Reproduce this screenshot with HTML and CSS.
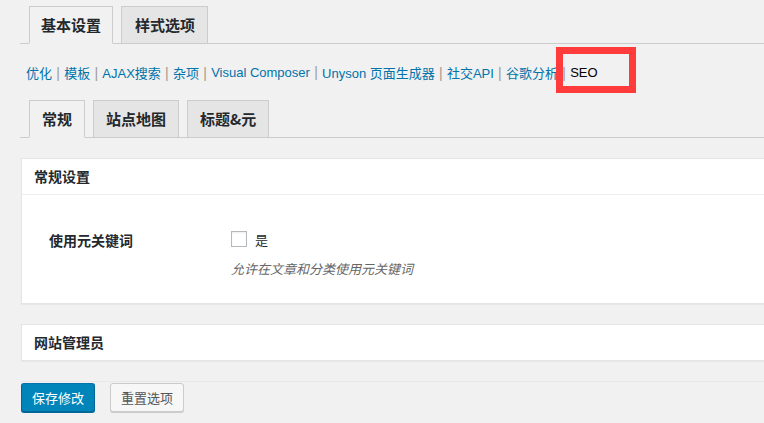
FILE: index.html
```html
<!DOCTYPE html>
<html lang="zh-CN">
<head>
<meta charset="utf-8">
<title>SEO 设置</title>
<link rel="stylesheet" href="styles.css">
</head>
<body>
<div class="wrap">
  <div class="nav-tabs nav-tabs-top">
    <span class="nav-tab active">基本设置</span>
    <span class="nav-tab">样式选项</span>
  </div>
  <ul class="subsub">
    <li><a href="#">优化</a><span class="sep">|</span></li>
    <li><a href="#">模板</a><span class="sep">|</span></li>
    <li><a href="#">AJAX搜索</a><span class="sep">|</span></li>
    <li><a href="#">杂项</a><span class="sep">|</span></li>
    <li><a href="#">Visual Composer</a><span class="sep">|</span></li>
    <li><a href="#">Unyson 页面生成器</a><span class="sep">|</span></li>
    <li><a href="#">社交API</a><span class="sep">|</span></li>
    <li><a href="#">谷歌分析</a><span class="sep">|</span></li>
    <li><span class="current">SEO</span></li>
  </ul>
  <div class="nav-tabs nav-tabs-sub">
    <span class="nav-tab active">常规</span>
    <span class="nav-tab">站点地图</span>
    <span class="nav-tab">标题&amp;元</span>
  </div>
  <div class="postbox">
    <h3 class="hndle">常规设置</h3>
    <div class="inside">
      <div class="field-row">
        <div class="field-label">使用元关键词</div>
        <div class="field-input">
          <label class="check"><span class="checkbox"></span><span>是</span></label>
          <p class="desc">允许在文章和分类使用元关键词</p>
        </div>
      </div>
    </div>
  </div>
  <div class="postbox">
    <h3 class="hndle">网站管理员</h3>
  </div>
  <div class="submit">
    <button class="btn btn-primary">保存修改</button>
    <button class="btn">重置选项</button>
  </div>
</div>
<div class="annot"></div>
</body>
</html>
```
FILE: styles.css
```css
html, body {
  margin: 0;
  padding: 0;
  background: #f1f1f1;
  overflow: hidden;
}
body {
  width: 764px;
  height: 423px;
  position: relative;
  font-family: "Liberation Sans", "Noto Sans CJK SC", sans-serif;
  font-size: 13px;
  color: #23282d;
}
.wrap {
  padding: 6px 0 0 20px;
}
.nav-tabs {
  display: flex;
  gap: 8px;
  padding-left: 9px;
  border-bottom: 1px solid #ccc;
  margin-right: -20px;
}
.nav-tab {
  display: block;
  box-sizing: border-box;
  height: 38px;
  line-height: 35px;
  padding: 0 11px;
  margin-bottom: -1px;
  border: 1px solid #ccc;
  background: #e5e5e5;
  font-family: "Noto Sans CJK SC", sans-serif;
  font-size: 15px;
  font-weight: 700;
  color: #23282d;
}
.nav-tab.active {
  background: #f1f1f1;
  border-bottom-color: #f1f1f1;
}
.nav-tabs-top .nav-tab + .nav-tab {
  padding: 0 12px 0 13px;
}
.nav-tabs-sub .nav-tab {
  padding: 0 12px;
}
.subsub {
  list-style: none;
  margin: 0;
  padding: 0 0 0 6px;
  height: 56px;
  display: flex;
  align-items: center;
  font-size: 13px;
  white-space: nowrap;
}
.subsub a {
  color: #0073aa;
  text-decoration: none;
}
.sep {
  color: #a09a90;
  margin: 0 4.25px;
  font-size: 14px;
}
.current {
  color: #000;
}
.postbox {
  margin: 20px -20px 20px 1px;
  background: #fff;
  border: 1px solid #e5e5e5;
  box-shadow: 0 1px 1px rgba(0, 0, 0, 0.04);
}
.hndle {
  margin: 0;
  height: 35px;
  line-height: 35px;
  padding: 0 12px;
  font-family: "Noto Sans CJK SC", sans-serif;
  font-size: 14px;
  font-weight: 700;
  color: #23282d;
}
.inside {
  border-top: 1px solid #eee;
  padding: 28px 12px 25px;
}
.field-row {
  display: flex;
}
.field-label {
  width: 182px;
  padding-left: 15px;
  font-family: "Noto Sans CJK SC", sans-serif;
  font-size: 14px;
  font-weight: 600;
  line-height: 34px;
  color: #23282d;
}
.field-input {
  padding-top: 8px;
}
.check {
  display: flex;
  align-items: center;
  gap: 8px;
  font-family: "Noto Sans CJK SC", sans-serif;
  font-size: 13px;
  height: 16px;
}
.checkbox {
  width: 14px;
  height: 14px;
  border: 1px solid #b4b9be;
  background: #fff;
  box-shadow: inset 0 1px 2px rgba(0, 0, 0, 0.07);
}
.desc {
  margin: 12px 0 0 0;
  font-family: "Noto Sans CJK SC", sans-serif;
  font-size: 13px;
  font-style: italic;
  color: #666;
}
.submit {
  display: flex;
  gap: 15px;
  margin-left: 1px;
  padding-top: 1px;
  border-top: 1px solid #e8e8e8;
  margin-right: -20px;
}
.btn {
  box-sizing: border-box;
  height: 29px;
  padding: 0 10px;
  border: 1px solid #ccc;
  border-radius: 3px;
  background: #f7f7f7;
  box-shadow: 0 1px 0 #ccc;
  font-family: "Noto Sans CJK SC", sans-serif;
  font-size: 13px;
  color: #555;
}
.btn-primary {
  background: #0085ba;
  border-color: #0073aa #006799 #006799;
  box-shadow: 0 1px 0 #006799;
  color: #fff;
}
.annot {
  position: absolute;
  left: 556px;
  top: 47px;
  width: 66px;
  height: 32px;
  border: 7px solid #ff3b3b;
}
```
